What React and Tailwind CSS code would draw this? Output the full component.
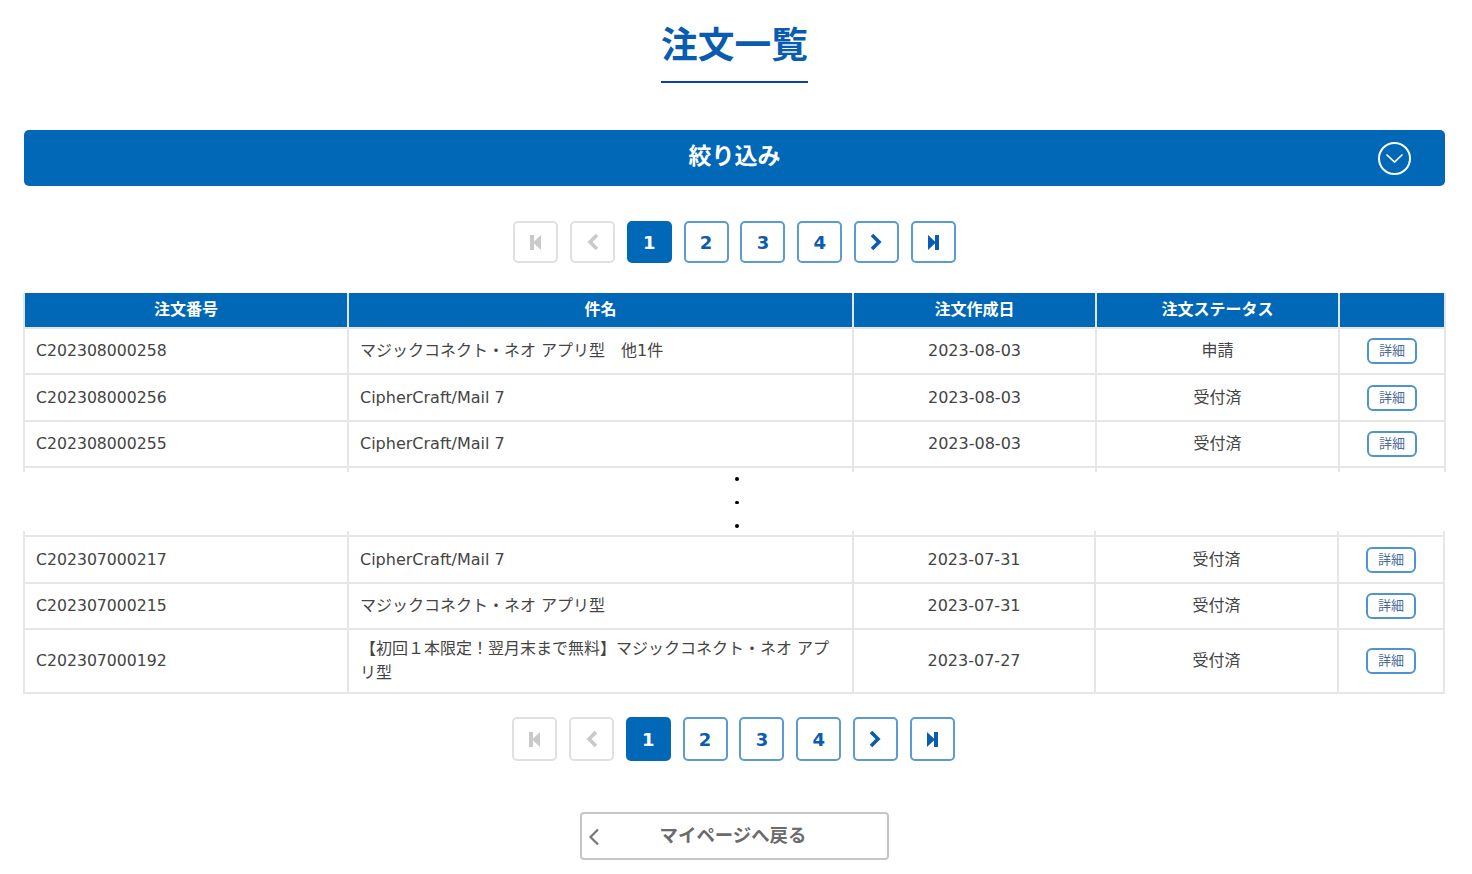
const fuente = { fontFamily: '"DejaVu Sans", "Noto Sans CJK JP", sans-serif' };

const filasArriba = [
  ["C202308000258", "マジックコネクト・ネオ アプリ型　他1件", "2023-08-03", "申請"],
  ["C202308000256", "CipherCraft/Mail 7", "2023-08-03", "受付済"],
  ["C202308000255", "CipherCraft/Mail 7", "2023-08-03", "受付済"],
];

const filasAbajo = [
  ["C202307000217", "CipherCraft/Mail 7", "2023-07-31", "受付済"],
  ["C202307000215", "マジックコネクト・ネオ アプリ型", "2023-07-31", "受付済"],
  ["C202307000192", "【初回１本限定！翌月末まで無料】マジックコネクト・ネオ アプリ型", "2023-07-27", "受付済"],
];

const IconoPrimero = ({ color }) => (
  <svg width="13" height="17" viewBox="0 0 13 17" fill={color}>
    <rect x="1" y="1" width="4" height="15" />
    <path d="M12 1v15L4 8.5z" />
  </svg>
);

const IconoUltimo = ({ color }) => (
  <svg width="13" height="17" viewBox="0 0 13 17" fill={color}>
    <rect x="8" y="1" width="4" height="15" />
    <path d="M1 1v15l8-7.500z" />
  </svg>
);

const IconoFlecha = ({ color, izquierda }) => (
  <svg width="14" height="18" viewBox="0 0 14 18" fill="none" stroke={color} strokeWidth="3.6">
    <path d={izquierda ? "M11 2 4 9l7 7" : "M3 2l7 7-7 7"} />
  </svg>
);

const BotonPagina = ({ children, activo, apagado, alto }) => (
  <button
    className={`w-[45px] ${alto} flex items-center justify-center rounded-[5px] border-2 text-[18px] font-bold ${
      activo
        ? "bg-[#0068b7] border-[#0068b7] text-white"
        : apagado
        ? "bg-white border-[#e0e0e0]"
        : "bg-white border-[#5a9bd2] text-[#0a5cb0]"
    }`}
  >
    {children}
  </button>
);

const Paginacion = ({ alto }) => (
  <div className="flex justify-center gap-[11.8px] pr-[3px]">
    <BotonPagina apagado alto={alto}><IconoPrimero color="#c9c9c9" /></BotonPagina>
    <BotonPagina apagado alto={alto}><IconoFlecha color="#c9c9c9" izquierda /></BotonPagina>
    <BotonPagina activo alto={alto}>1</BotonPagina>
    <BotonPagina alto={alto}>2</BotonPagina>
    <BotonPagina alto={alto}>3</BotonPagina>
    <BotonPagina alto={alto}>4</BotonPagina>
    <BotonPagina alto={alto}><IconoFlecha color="#0a5cb0" /></BotonPagina>
    <BotonPagina alto={alto}><IconoUltimo color="#0a5cb0" /></BotonPagina>
  </div>
);

const Fila = ({ fila, alto }) => (
  <tr className={`${alto} text-[16px] text-[#444]`}>
    <td className="border-2 border-[#e6e6e6] pl-[11px]">
      <span className="text-[15.7px]">{fila[0]}</span>
    </td>
    <td className="border-2 border-[#e6e6e6] px-[11px] leading-[24px]">{fila[1]}</td>
    <td className="border-2 border-[#e6e6e6] text-center">{fila[2]}</td>
    <td className="border-2 border-[#e6e6e6] text-center">{fila[3]}</td>
    <td className="border-2 border-[#e6e6e6] text-center">
      <button className="w-[50px] h-[26px] rounded-[6px] border-2 border-[#4f93cf] bg-white text-[13px] leading-[20px] text-[#4c6c98] align-middle">
        詳細
      </button>
    </td>
  </tr>
);

const Columnas = ({ ancho }) => (
  <colgroup>
    <col className="w-[324px]" />
    <col className="w-[505px]" />
    <col className={ancho} />
    <col className="w-[243px]" />
    <col className="w-[106px]" />
  </colgroup>
);

const Tramo = () => (
  <tr className="h-[5px]">
    {[0, 1, 2, 3, 4].map((i) => (
      <td key={i} className="border-x-2 border-[#e6e6e6] p-0" />
    ))}
  </tr>
);

export default function App() {
  return (
    <div className="w-[1472px] h-[874px] overflow-hidden bg-white flex flex-col" style={fuente}>
      <div className="flex justify-center pt-[21px] pr-[3px]">
        <h1 className="text-[36.7px] leading-[50px] font-bold text-[#0a5cb0] border-b-2 border-[#0a3fb5] pb-[10px]">
          注文一覧
        </h1>
      </div>

      <div className="mx-[24px] mt-[46.5px] w-[1421px] h-[56.5px] shrink-0 rounded-[5px] bg-[#0068b7] relative flex items-center justify-center">
        <span className="text-[23px] font-bold text-white -mt-[4px]">絞り込み</span>
        <span className="absolute right-[34px] top-[12px] w-[33px] h-[33px] rounded-full border-2 border-white flex items-center justify-center">
          <svg width="19" height="11" viewBox="0 0 19 11" fill="none" stroke="white" strokeWidth="1.7">
            <path d="M1.5 1.500 9.500 9l8-7.500" />
          </svg>
        </span>
      </div>

      <div className="mt-[35px]">
        <Paginacion alto="h-[42px]" />
      </div>

      <table className="ml-[23px] mt-[30px] w-[1421px] table-fixed border-collapse">
        <Columnas ancho="w-[243px]" />
        <thead>
          <tr className="h-[35px] bg-[#0068b7] text-white text-[16px] font-bold">
            <th className="border-x-2 border-[#dfe6ee]">注文番号</th>
            <th className="border-x-2 border-[#dfe6ee]">件名</th>
            <th className="border-x-2 border-[#dfe6ee]">注文作成日</th>
            <th className="border-x-2 border-[#dfe6ee]">注文ステータス</th>
            <th className="border-x-2 border-[#dfe6ee]"></th>
          </tr>
        </thead>
        <tbody>
          {filasArriba.map((f) => (
            <Fila key={f[0]} fila={f} alto="h-[46.4px]" />
          ))}
          <Tramo />
        </tbody>
      </table>

      <div className="h-[59px] shrink-0 pt-[5px] pl-[2px] flex flex-col items-center gap-[20px]">
        <span className="w-[3.5px] h-[3.5px] rounded-full bg-black" />
        <span className="w-[3.5px] h-[3.5px] rounded-full bg-black" />
        <span className="w-[3.5px] h-[3.5px] rounded-full bg-black" />
      </div>

      <table className="ml-[23px] w-[1420px] table-fixed border-collapse">
        <Columnas ancho="w-[242px]" />
        <tbody>
          <Tramo />
          <Fila fila={filasAbajo[0]} alto="h-[47px]" />
          <Fila fila={filasAbajo[1]} alto="h-[46px]" />
          <Fila fila={filasAbajo[2]} alto="h-[64px]" />
        </tbody>
      </table>

      <div className="mt-[23px] pr-[2px]">
        <Paginacion alto="h-[44px]" />
      </div>

      <div className="flex justify-center mt-[51px] pr-[3px]">
        <button className="w-[309px] h-[48px] rounded-[4px] border-2 border-[#c6c6c6] bg-white relative text-[18.4px] font-bold text-[#6b6b6b] pr-[3px]">
          <svg width="12" height="18" viewBox="0 0 12 18" fill="none" stroke="#777" strokeWidth="2.2" className="absolute left-[6px] top-[14px]">
            <path d="M10 1.500 2.500 9l7.500 7.500" />
          </svg>
          マイページへ戻る
        </button>
      </div>
    </div>
  );
}
